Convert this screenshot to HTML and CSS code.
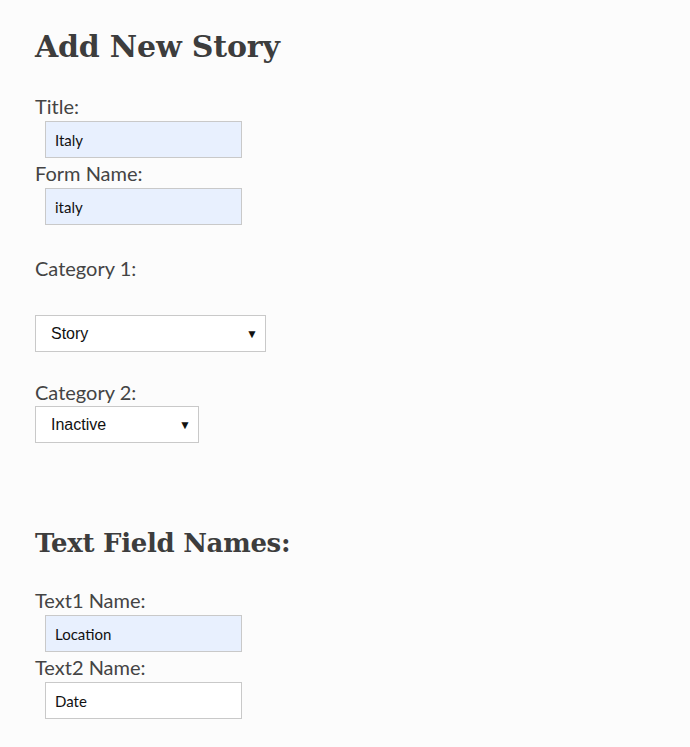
FILE: index.html
```html
<!DOCTYPE html>
<html>
<head>
<meta charset="utf-8">
<link rel="stylesheet" href="styles.css">
</head>
<body>
<main class="page">
  <h1 class="title">Add New Story</h1>
  <form class="form">
    <label class="label">Title:</label>
    <input class="field field-filled" type="text" value="Italy">
    <label class="label">Form Name:</label>
    <input class="field field-filled" type="text" value="italy">

    <label class="label label-cat1">Category 1:</label>
    <div class="select select-wide"><span>Story</span><span class="arrow">▼</span></div>

    <label class="label label-cat2">Category 2:</label>
    <div class="select select-narrow"><span>Inactive</span><span class="arrow">▼</span></div>

    <h2 class="subtitle">Text Field Names:</h2>

    <label class="label">Text1 Name:</label>
    <input class="field field-filled" type="text" value="Location">
    <label class="label">Text2 Name:</label>
    <input class="field" type="text" value="Date">
  </form>
</main>
</body>
</html>
```

FILE: styles.css
```css
html, body {
  margin: 0;
  padding: 0;
  background: #fcfcfc;
}
.page {
  padding: 25px 0 0 35px;
  color: #3c3c3c;
}
.title {
  margin: 0;
  font-family: "DejaVu Serif", serif;
  font-weight: bold;
  font-size: 30px;
  line-height: 44px;
  color: #3d3d3d;
  letter-spacing: -0.2px;
}
.subtitle {
  margin: 80px 0 0 0;
  font-family: "DejaVu Serif", serif;
  font-weight: bold;
  font-size: 26px;
  line-height: 40px;
  color: #3d3d3d;
  letter-spacing: -0.3px;
}
.form {
  display: flex;
  flex-direction: column;
  align-items: flex-start;
  margin-top: 24px;
}
.label {
  display: block;
  font-family: Lato, "Liberation Sans", sans-serif;
  font-size: 20px;
  line-height: 26px;
  color: #444;
}
.field {
  box-sizing: border-box;
  width: 197px;
  height: 37px;
  margin: 2px 0 0 10px;
  padding: 0 9px;
  border: 1px solid #c9c9c9;
  background: #fff;
  font-family: Lato, "Liberation Sans", sans-serif;
  font-size: 15px;
  color: #111;
  outline: none;
}
.field + .label {
  margin-top: 2px;
}
.field-filled {
  background: #e8f0fe;
}
.field + .label-cat1 {
  margin-top: 30px;
}
.label-cat2 {
  margin-top: 27px;
}
.select {
  box-sizing: border-box;
  display: flex;
  justify-content: space-between;
  align-items: center;
  height: 37px;
  padding: 0 7px 0 15px;
  border: 1px solid #c9c9c9;
  background: #fff;
  font-family: "Liberation Sans", Arial, sans-serif;
  font-size: 16px;
  color: #111;
}
.select-wide {
  width: 231px;
  margin-top: 34px;
}
.select-narrow {
  width: 164px;
  margin-top: 1px;
}
.arrow {
  font-size: 12px;
  color: #111;
}
.subtitle + .label {
  margin-top: 24px;
}
```
